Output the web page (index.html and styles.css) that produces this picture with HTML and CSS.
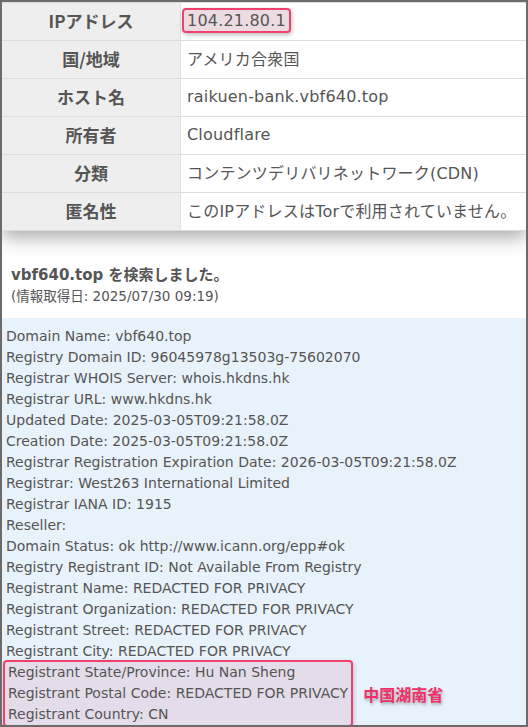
FILE: index.html
```html
<!DOCTYPE html>
<html lang="ja">
<head>
    <meta charset="UTF-8">
    <title>IP情報</title>
    <link rel="stylesheet" href="styles.css">
</head>
<body>
<div class="frame">
    <div class="info">
        <table class="info-table">
            <tr>
                <th>IPアドレス</th>
                <td><span class="ip-mark">104.21.80.1</span></td>
            </tr>
            <tr>
                <th>国/地域</th>
                <td>アメリカ合衆国</td>
            </tr>
            <tr>
                <th>ホスト名</th>
                <td>raikuen-bank.vbf640.top</td>
            </tr>
            <tr>
                <th>所有者</th>
                <td>Cloudflare</td>
            </tr>
            <tr>
                <th>分類</th>
                <td>コンテンツデリバリネットワーク(CDN)</td>
            </tr>
            <tr>
                <th>匿名性</th>
                <td>このIPアドレスはTorで利用されていません。</td>
            </tr>
        </table>
    </div>

    <div class="search">
        <p class="search-title">vbf640.top を検索しました。</p>
        <p class="search-date">(情報取得日: 2025/07/30 09:19)</p>
    </div>

    <div class="whois">
        <div class="line">Domain Name: vbf640.top</div>
        <div class="line">Registry Domain ID: 96045978g13503g-75602070</div>
        <div class="line">Registrar WHOIS Server: whois.hkdns.hk</div>
        <div class="line">Registrar URL: www.hkdns.hk</div>
        <div class="line">Updated Date: 2025-03-05T09:21:58.0Z</div>
        <div class="line">Creation Date: 2025-03-05T09:21:58.0Z</div>
        <div class="line">Registrar Registration Expiration Date: 2026-03-05T09:21:58.0Z</div>
        <div class="line">Registrar: West263 International Limited</div>
        <div class="line">Registrar IANA ID: 1915</div>
        <div class="line">Reseller:</div>
        <div class="line">Domain Status: ok http://www.icann.org/epp#ok</div>
        <div class="line">Registry Registrant ID: Not Available From Registry</div>
        <div class="line">Registrant Name: REDACTED FOR PRIVACY</div>
        <div class="line">Registrant Organization: REDACTED FOR PRIVACY</div>
        <div class="line">Registrant Street: REDACTED FOR PRIVACY</div>
        <div class="line">Registrant City: REDACTED FOR PRIVACY</div>
        <!-- 強調する部分 -->
        <div class="mark">
            <div class="mark-box">
                <div class="line">Registrant State/Province: Hu Nan Sheng</div>
                <div class="line">Registrant Postal Code: REDACTED FOR PRIVACY</div>
                <div class="line">Registrant Country: CN</div>
            </div>
            <span class="mark-label">中国湖南省</span>
        </div>
    </div>
</div>
</body>
</html>
```

FILE: styles.css
```css
body {
    margin: 0;
    font-family: "DejaVu Sans", "Noto Sans CJK JP", sans-serif;
    color: #555;
}
p {
    margin: 0;
}
.frame {
    width: 528px;
    height: 727px;
    box-sizing: border-box;
    border: 2px solid #6b6b6b;
    overflow: hidden;
    display: flex;
    flex-direction: column;
}

/* 上の表 */
.info {
    position: relative;
    box-shadow: 0 6px 18px rgba(0, 0, 0, 0.35);
    background: #fff;
}
.info-table {
    width: 100%;
    border-collapse: collapse;
    border-top: 1px solid #ddd;
}
.info-table th,
.info-table td {
    height: 34px;
    padding: 0 0 3px;
    border-bottom: 1px solid #ddd;
    font-size: 16px;
}
.info-table th {
    width: 178px;
    background: #eee;
    font-weight: bold;
    text-align: center;
    font-family: "Noto Sans CJK JP", sans-serif;
    font-size: 17px;
    color: #555;
}
.info-table td {
    padding-left: 6px;
    border-left: 1px solid #e2e2e2;
    letter-spacing: 0.2px;
}
.ip-mark {
    display: inline-block;
    padding: 0 3px;
    margin-left: -5px;
    line-height: 21px;
    border: 2px solid #f0406e;
    border-radius: 4px;
    background: #ecdce2;
    box-shadow: 1px 2px 4px rgba(0, 0, 0, 0.25);
}

/* 検索結果見出し */
.search {
    padding: 34px 9px 11px;
}
.search-title {
    font-weight: bold;
    font-size: 15px;
    line-height: 20px;
}
.search-date {
    font-size: 13.5px;
    line-height: 22px;
}

/* whois */
.whois {
    flex: 1;
    background: #e8f2fb;
    padding: 8px 0 0 2px;
    font-size: 14px;
}
.line {
    line-height: 21px;
    padding-left: 2px;
}
.mark {
    display: flex;
    align-items: center;
    gap: 10px;
}
.mark-box {
    margin: -2px 0 -2px -1px; /* 枠線で行の高さがずれないように */
    padding: 0 3px 0 1px;
    border: 2px solid #f0406e;
    border-radius: 4px;
    background: #e4dce8;
    box-shadow: 1px 2px 4px rgba(0, 0, 0, 0.2);
}
.mark-label {
    font-weight: bold;
    font-size: 16px;
    color: #f0306a;
    font-family: "Noto Sans CJK JP", sans-serif;
    text-shadow: 1px 2px 3px rgba(0, 0, 0, 0.3);
}
```
